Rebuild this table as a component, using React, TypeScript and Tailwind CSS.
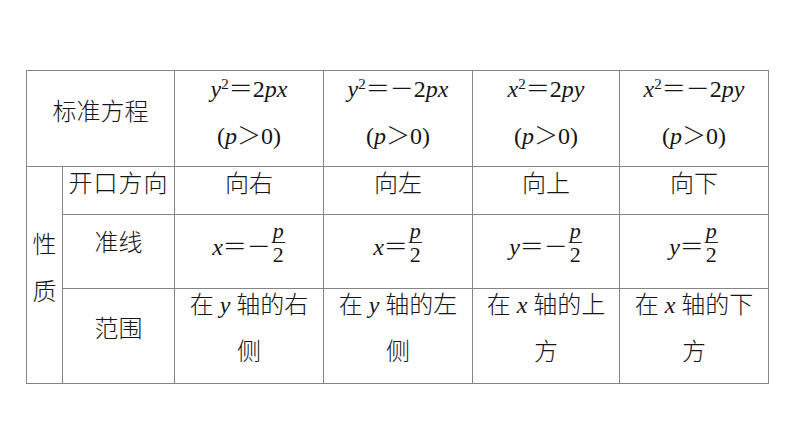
const serif = "font-['Liberation_Serif','Noto_Sans_CJK_SC',serif]";

const V = ({ children }: { children: React.ReactNode }) => <i className="italic">{children}</i>;

const Frac = () => (
  <span className="inline-flex flex-col items-center align-middle -mt-[10px] mx-[1px]">
    <span className="italic text-[22px] leading-[18px] px-[1px]">p</span>
    <span className="block w-[13px] h-px bg-[#222] mt-[2px]" />
    <span className="text-[22px] leading-[24px]">2</span>
  </span>
);

const Sq = () => <sup className="text-[15px] not-italic">2</sup>;

const header = [
  <><V>y</V><Sq />＝2<V>px</V></>,
  <><V>y</V><Sq />＝－2<V>px</V></>,
  <><V>x</V><Sq />＝2<V>py</V></>,
  <><V>x</V><Sq />＝－2<V>py</V></>,
];

const dirs = ["向右", "向左", "向上", "向下"];

const lines = [
  <><V>x</V>＝－<Frac /></>,
  <><V>x</V>＝<Frac /></>,
  <><V>y</V>＝－<Frac /></>,
  <><V>y</V>＝<Frac /></>,
];

const ranges: [React.ReactNode, string][] = [
  [<>在 <V>y</V> 轴的右</>, "侧"],
  [<>在 <V>y</V> 轴的左</>, "侧"],
  [<>在 <V>x</V> 轴的上</>, "方"],
  [<>在 <V>x</V> 轴的下</>, "方"],
];

const cell = "border border-[#858585] text-center p-0 align-middle leading-[47px]";

export default function App() {
  return (
    <div className={`w-[794px] h-[446px] bg-white pl-[26px] pt-[70px] text-[#161616] text-[24px] font-light ${serif}`}>
      <table className="table-fixed border-collapse w-[742px]">
        <colgroup>
          <col className="w-[36px]" />
          <col className="w-[112px]" />
          <col className="w-[149px]" />
          <col className="w-[149px]" />
          <col className="w-[147px]" />
          <col className="w-[149px]" />
        </colgroup>
        <tbody>
          <tr className="h-[96px]">
            <td colSpan={2} className={cell}>
              <div className="-mt-3">标准方程</div>
            </td>
            {header.map((h, i) => (
              <td key={i} className={cell}>
                <div className="-mt-3">
                  <div className="whitespace-nowrap">{h}</div>
                  <div>(<V>p</V>＞0)</div>
                </div>
              </td>
            ))}
          </tr>
          <tr className="h-[48px]">
            <td rowSpan={3} className={cell}>
              <div className="-mt-3">
                <div>性</div>
                <div>质</div>
              </div>
            </td>
            <td className={`${cell} !align-top !leading-[34px] tracking-[1px]`}>开口方向</td>
            {dirs.map((d) => (
              <td key={d} className={`${cell} !align-top !leading-[34px]`}>{d}</td>
            ))}
          </tr>
          <tr className="h-[74px]">
            <td className={cell}>
              <div className="-mt-4">准线</div>
            </td>
            {lines.map((l, i) => (
              <td key={i} className={cell}>
                <div className="-mt-2 whitespace-nowrap">{l}</div>
              </td>
            ))}
          </tr>
          <tr className="h-[95px]">
            <td className={cell}>
              <div className="-mt-[14px]">范围</div>
            </td>
            {ranges.map(([a, b], i) => (
              <td key={i} className={cell}>
                <div className="-mt-[14px]">
                  <div className="whitespace-nowrap">{a}</div>
                  <div>{b}</div>
                </div>
              </td>
            ))}
          </tr>
        </tbody>
      </table>
    </div>
  );
}
